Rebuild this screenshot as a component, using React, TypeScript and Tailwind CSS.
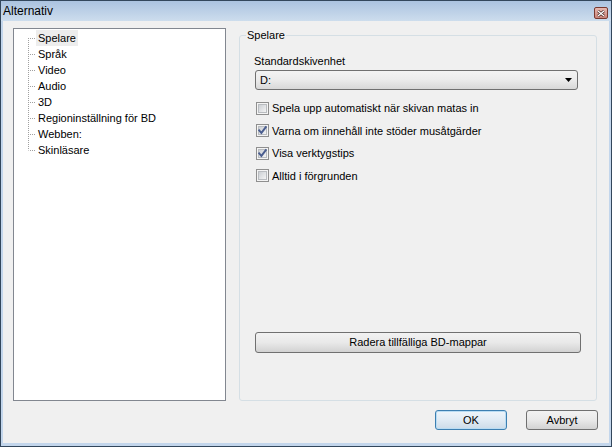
import React from "react"

const treeItems = [
  "Spelare",
  "Språk",
  "Video",
  "Audio",
  "3D",
  "Regioninställning för BD",
  "Webben:",
  "Skinläsare",
]

const options = [
  { label: "Spela upp automatiskt när skivan matas in", checked: false },
  { label: "Varna om iinnehåll inte stöder musåtgärder", checked: true },
  { label: "Visa verktygstips", checked: true },
  { label: "Alltid i förgrunden", checked: false },
]

// dotted tree connector
function TreeLine({ first, last }: { first: boolean; last: boolean }) {
  return (
    <svg width="8" height="16" className="shrink-0">
      <line
        x1="0.5"
        y1={first ? 8 : 0}
        x2="0.5"
        y2={last ? 8.5 : 16}
        stroke="#a0a0a0"
        strokeDasharray="1 1"
      />
      <line x1="2" y1="8.5" x2="8" y2="8.5" stroke="#a0a0a0" strokeDasharray="1 1" />
    </svg>
  )
}

function CheckBox({ checked }: { checked: boolean }) {
  return (
    <svg width="13" height="13" className="shrink-0">
      <defs>
        <linearGradient id="cbfill" x1="0" y1="0" x2="1" y2="1">
          <stop offset="0" stopColor="#c9cdd2" />
          <stop offset="1" stopColor="#f6f6f6" />
        </linearGradient>
      </defs>
      <rect x="0.5" y="0.5" width="12" height="12" fill="#f4f4f4" stroke="#8f8f8f" />
      <rect x="2.5" y="2.5" width="8" height="8" fill="url(#cbfill)" stroke="#b9bcc0" />
      {checked && (
        <path
          d="M3.2 6.4 L5.4 8.9 L9.8 3.2"
          stroke="#4a5d8f"
          strokeWidth="1.9"
          fill="none"
          strokeLinecap="square"
        />
      )}
    </svg>
  )
}

export default function App() {
  return (
    <div
      className="w-[612px] h-[447px] flex flex-col border border-[#33475c] bg-[#c3d6ec] text-[11px] text-black"
      style={{ fontFamily: '"Liberation Sans", Arial, sans-serif' }}
    >
      {/* TITLE BAR */}
      <div className="h-[20px] shrink-0 flex items-center justify-between pl-[2px] pr-[3px] bg-gradient-to-b from-[#abc3e0] to-[#cddded]">
        <span className="text-[12px] leading-none">Alternativ</span>
        <div className="w-[14px] h-[12px] mt-[4px] flex items-center justify-center rounded-[2px] border border-[#7a3a30] bg-gradient-to-b from-[#e7b9b1] to-[#c98479]">
          <svg width="8" height="7" viewBox="0 0 8 7">
            <path d="M1 1 L7 6 M7 1 L1 6" stroke="#3a1a16" strokeWidth="2.6" />
            <path d="M1 1 L7 6 M7 1 L1 6" stroke="#ffffff" strokeWidth="1.3" />
          </svg>
        </div>
      </div>

      {/* CONTENT */}
      <div className="flex-1 flex flex-col mx-[2px] mb-[3px] bg-[#f0f0f0]">
        <div className="flex gap-[13px] pt-[7px] px-[10px]">
          {/* TREE */}
          <div className="w-[213px] h-[373px] border border-[#828790] bg-white pt-[1px] pl-[14px]">
            {treeItems.map((item, i) => (
              <div key={item} className="h-[16px] flex items-center">
                <TreeLine first={i === 0} last={i === treeItems.length - 1} />
                <span
                  className={
                    "px-[2px] h-[16px] leading-[16px] " +
                    (i === 0 ? "bg-[#ededed]" : "")
                  }
                >
                  {item}
                </span>
              </div>
            ))}
          </div>

          {/* GROUP */}
          <fieldset className="w-[358px] h-[373px] border border-[#d5dfe5] rounded-[3px] pl-[6px]">
            <legend className="px-[1px] leading-[14px]">Spelare</legend>

            <div className="pl-[9px] flex flex-col">
              <div className="mt-[12px] h-[14px] leading-[14px] -ml-[1px]">Standardskivenhet</div>

              {/* DROPDOWN */}
              <div className="mt-[2px] w-[323px] h-[20px] flex items-center justify-between pl-[4px] pr-[5px] rounded-[3px] border border-[#707070] bg-gradient-to-b from-[#f3f3f3] via-[#ebebeb] to-[#d8d8d8]">
                <span>D:</span>
                <svg width="7" height="4" viewBox="0 0 7 4">
                  <path d="M0 0 H7 L3.5 4 Z" fill="#000" />
                </svg>
              </div>

              <div className="mt-[7px] flex flex-col">
                {options.map((o) => (
                  <div key={o.label} className="h-[22.5px] flex items-center gap-[3px] ml-[1px]">
                    <CheckBox checked={o.checked} />
                    <span>{o.label}</span>
                  </div>
                ))}
              </div>

              <button className="mt-[145px] w-[326px] h-[21px] rounded-[3px] border border-[#707070] bg-gradient-to-b from-[#f2f2f2] via-[#e9e9e9] to-[#d2d2d2] text-center">
                Radera tillfälliga BD-mappar
              </button>
            </div>
          </fieldset>
        </div>

        {/* FOOTER */}
        <div className="mt-[9px] flex justify-end gap-[19px] pr-[11px]">
          <button className="w-[72px] h-[20px] rounded-[3px] border border-[#3c7fb1] bg-gradient-to-b from-[#eef5fb] via-[#e0ebf4] to-[#ccdbe8] shadow-[inset_0_0_0_1px_#b9dcf3]">
            OK
          </button>
          <button className="w-[72px] h-[20px] rounded-[3px] border border-[#707070] bg-gradient-to-b from-[#f2f2f2] via-[#e9e9e9] to-[#d2d2d2]">
            Avbryt
          </button>
        </div>
      </div>
    </div>
  )
}
